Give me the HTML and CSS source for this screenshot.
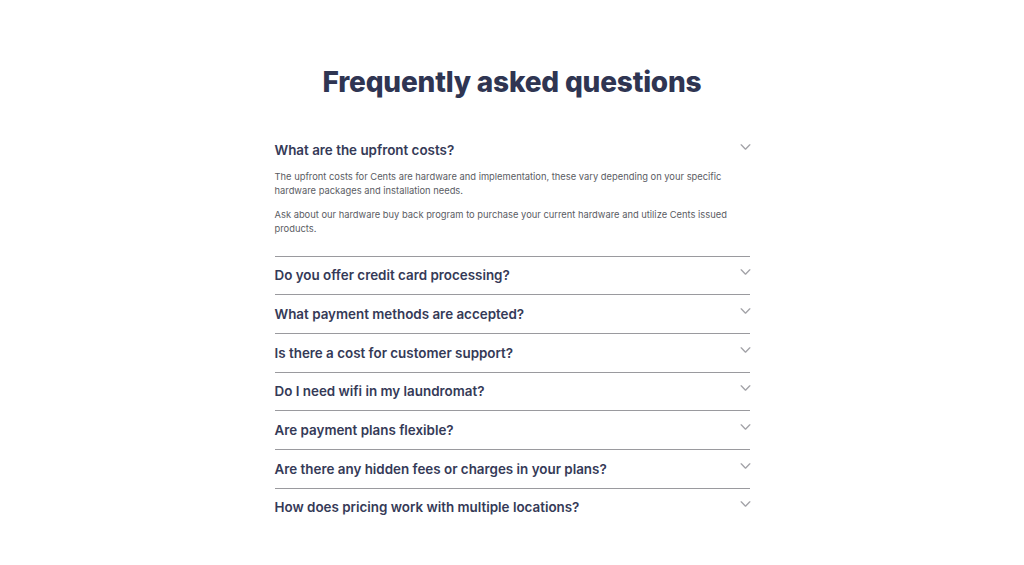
FILE: index.html
```html
<!DOCTYPE html>
<html lang="en">
<head>
<meta charset="utf-8">
<title>FAQ</title>
<link rel="stylesheet" href="styles.css">
</head>
<body>
<main class="page">
  <h1 class="title">Frequently asked questions</h1>
  <div class="faq">
    <div class="item open">
      <div class="q"><span>What are the upfront costs?</span><svg class="chev" viewBox="0 0 12 7" width="11" height="6"><path d="M1 1l5 5 5-5" fill="none" stroke="#a3a3a8" stroke-width="1.6" stroke-linecap="round" stroke-linejoin="round"/></svg></div>
      <div class="a">
        <p>The upfront costs for Cents are hardware and implementation, these vary depending on your specific hardware packages and installation needs.</p>
        <p>Ask about our hardware buy back program to purchase your current hardware and utilize Cents issued products.</p>
      </div>
    </div>
    <div class="item">
      <div class="q"><span>Do you offer credit card processing?</span><svg class="chev" viewBox="0 0 12 7" width="11" height="6"><path d="M1 1l5 5 5-5" fill="none" stroke="#a3a3a8" stroke-width="1.6" stroke-linecap="round" stroke-linejoin="round"/></svg></div>
    </div>
    <div class="item">
      <div class="q"><span>What payment methods are accepted?</span><svg class="chev" viewBox="0 0 12 7" width="11" height="6"><path d="M1 1l5 5 5-5" fill="none" stroke="#a3a3a8" stroke-width="1.6" stroke-linecap="round" stroke-linejoin="round"/></svg></div>
    </div>
    <div class="item">
      <div class="q"><span>Is there a cost for customer support?</span><svg class="chev" viewBox="0 0 12 7" width="11" height="6"><path d="M1 1l5 5 5-5" fill="none" stroke="#a3a3a8" stroke-width="1.6" stroke-linecap="round" stroke-linejoin="round"/></svg></div>
    </div>
    <div class="item">
      <div class="q"><span>Do I need wifi in my laundromat?</span><svg class="chev" viewBox="0 0 12 7" width="11" height="6"><path d="M1 1l5 5 5-5" fill="none" stroke="#a3a3a8" stroke-width="1.6" stroke-linecap="round" stroke-linejoin="round"/></svg></div>
    </div>
    <div class="item">
      <div class="q"><span>Are payment plans flexible?</span><svg class="chev" viewBox="0 0 12 7" width="11" height="6"><path d="M1 1l5 5 5-5" fill="none" stroke="#a3a3a8" stroke-width="1.6" stroke-linecap="round" stroke-linejoin="round"/></svg></div>
    </div>
    <div class="item">
      <div class="q"><span>Are there any hidden fees or charges in your plans?</span><svg class="chev" viewBox="0 0 12 7" width="11" height="6"><path d="M1 1l5 5 5-5" fill="none" stroke="#a3a3a8" stroke-width="1.6" stroke-linecap="round" stroke-linejoin="round"/></svg></div>
    </div>
    <div class="item">
      <div class="q"><span>How does pricing work with multiple locations?</span><svg class="chev" viewBox="0 0 12 7" width="11" height="6"><path d="M1 1l5 5 5-5" fill="none" stroke="#a3a3a8" stroke-width="1.6" stroke-linecap="round" stroke-linejoin="round"/></svg></div>
    </div>
  </div>
</main>
</body>
</html>
```
FILE: styles.css
```css
html, body {
  margin: 0;
  padding: 0;
  background: #ffffff;
}
body {
  font-family: Inter, "Noto Sans", Arial, sans-serif;
  color: #2f3552;
}
.page {
  padding-top: 64px;
}
.title {
  margin: 0;
  text-align: center;
  font-size: 28px;
  line-height: 36px;
  font-weight: 800;
  letter-spacing: -0.2px;
  color: #2f3552;
}
.faq {
  width: 475px;
  margin: 31px auto 0;
}
.item + .item {
  border-top: 1px solid #9a9a9e;
}
.q {
  height: 37.67px;
  display: flex;
  align-items: center;
  justify-content: space-between;
  font-size: 13.4px;
  font-weight: 600;
  color: #353a57;
}
.chev {
  margin-top: -6px;
  margin-right: -1px;
  flex: none;
}
.a {
  padding-top: 1px;
  padding-bottom: 20px;
  font-size: 9.35px;
  line-height: 14px;
  color: #5a5c63;
}
.a p {
  margin: 0;
}
.a p + p {
  margin-top: 10px;
}
```
